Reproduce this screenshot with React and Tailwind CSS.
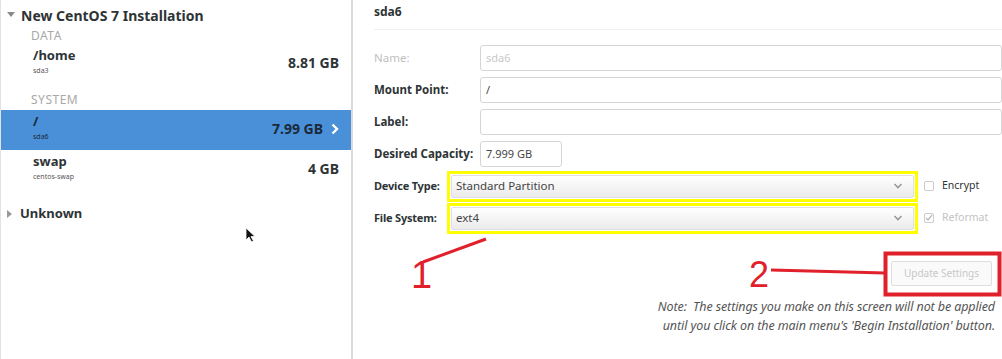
import React from 'react';

const font = { fontFamily: '"Noto Sans", "Open Sans", "DejaVu Sans", sans-serif' };

const Row = ({ name, dev, size, selected }) => (
  <div
    className={`flex items-start justify-between h-[40px] pl-[32px] pr-[12px] pt-[3px] ${
      selected ? 'bg-[#4a90d9] text-[#1b2a3a]' : 'text-[#2e3436]'
    }`}
  >
    <div className="flex flex-col">
      <span className="text-[13px] font-bold leading-[17px]">{name}</span>
      <span className={`text-[7px] leading-[14px] ${selected ? 'text-[#1b2a3a]' : 'text-[#555]'}`}>{dev}</span>
    </div>
    <div className="flex items-center gap-[8px] mt-[5px]">
      <span className="text-[14px] font-bold">{size}</span>
      {selected && (
        <svg width="8" height="12" viewBox="0 0 8 12">
          <path d="M1.5 1.5 L6 6 L1.5 10.5" stroke="#fff" strokeWidth="2.4" fill="none" />
        </svg>
      )}
    </div>
  </div>
);

const Field = ({ label, value, muted, labelW = 'w-[106px]', inputW = 'flex-1' }) => (
  <div className="flex items-center h-[32px]">
    <span className={`${labelW} text-[11.5px] font-bold ${muted ? 'text-[#c0c0c0] font-normal' : 'text-[#2e3436]'}`}>{label}</span>
    <div
      className={`${inputW} h-[26px] border border-[#d5d5d5] rounded-[3px] bg-white flex items-center px-[5px] text-[11px] ${
        muted ? 'text-[#c8c8c8]' : 'text-[#444]'
      }`}
    >
      {value}
    </div>
  </div>
);

const Combo = ({ label, value, check, checked, disabledCheck }) => (
  <div className="flex items-center h-[32px]">
    <span className="w-[73px] text-[11px] font-bold text-[#2e3436] tracking-[-0.2px]">{label}</span>
    <div className="w-[471px] h-[31px] border-[3px] border-[#ffff00] bg-white p-[1px]">
      <div className="h-full bg-gradient-to-b from-white to-[#ebebeb] border border-[#e0e0e0] rounded-[2px] flex items-center justify-between px-[4px] text-[11.5px] text-[#444]">
        <span>{value}</span>
        <svg width="10" height="8" viewBox="0 0 10 8" className="mr-[6px]">
          <path d="M1.5 2 L5 5.5 L8.5 2" stroke="#999" strokeWidth="1.6" fill="none" />
        </svg>
      </div>
    </div>
    <div className="flex items-center ml-[6px] gap-[8px]">
      <div className="w-[10px] h-[10px] border border-[#ccc] rounded-[2px] flex items-center justify-center">
        {checked && (
          <svg width="8" height="8" viewBox="0 0 8 8">
            <path d="M1 4 L3 6 L7 1" stroke="#bbb" strokeWidth="1.4" fill="none" />
          </svg>
        )}
      </div>
      <span className={`text-[10.5px] ${disabledCheck ? 'text-[#c4c4c4]' : 'text-[#2e3436]'}`}>{check}</span>
    </div>
  </div>
);

export default function App() {
  return (
    <div className="relative w-[1002px] h-[359px] bg-white flex overflow-hidden" style={font}>
      {/* left: partition list */}
      <div className="w-[353px] h-full border-l border-l-[#e2e2e2] border-r-2 border-r-[#dadada] flex flex-col">
        <div className="flex items-center h-[28px] pt-[2px] pl-[6px] gap-[6px] text-[#2e3436]">
          <svg width="8" height="6" viewBox="0 0 8 6">
            <path d="M0 0 L8 0 L4 5 Z" fill="#888" />
          </svg>
          <span className="text-[14px] font-bold">New CentOS 7 Installation</span>
        </div>
        <div className="pl-[30px] h-[16px] text-[12px] leading-[16px] text-[#a8a8a8] tracking-[0.5px]">DATA</div>
        <Row name="/home" dev="sda3" size="8.81 GB" />
        <div className="pl-[30px] h-[26px] pt-[8px] text-[12px] leading-[16px] text-[#a8a8a8] tracking-[0.5px]">SYSTEM</div>
        <Row name="/" dev="sda6" size="7.99 GB" selected />
        <Row name="swap" dev="centos-swap" size="4 GB" />
        <div className="flex items-center h-[26px] mt-[11px] pl-[6px] gap-[8px] text-[#2e3436]">
          <svg width="5" height="8" viewBox="0 0 5 8">
            <path d="M0 0 L5 4 L0 8 Z" fill="#999" />
          </svg>
          <span className="text-[13px] font-bold">Unknown</span>
        </div>
        <div className="relative flex-1">
          <svg width="12" height="18" viewBox="0 0 12 18" className="absolute left-[244px] top-[0px]">
            <path d="M1 1 L1 13 L4 10 L6.5 15 L8.5 14 L6 9.5 L10 9.5 Z" fill="#111" stroke="#fff" strokeWidth="0.8" />
          </svg>
        </div>
      </div>

      {/* right: details */}
      <div className="flex-1 flex flex-col pl-[21px]">
        <div className="h-[30px] pt-[3px] text-[12px] font-bold text-[#2e3436] border-b border-[#f0f0f0]">
          <span>sda6</span>
        </div>
        <div className="flex flex-col mt-[12px]">
          <Field label="Name:" value="sda6" muted />
          <Field label="Mount Point:" value="/" />
          <Field label="Label:" value="" />
          <Field label="Desired Capacity:" value="7.999 GB" inputW="w-[82px]" />
          <Combo label="Device Type:" value="Standard Partition" check="Encrypt" />
          <Combo label="File System:" value="ext4" check="Reformat" checked disabledCheck />
        </div>
        <div className="flex justify-end mt-[27px] pr-[10px]">
          <div className="w-[101px] h-[25px] border border-[#dedede] rounded-[2px] bg-[#fafafa] flex items-center justify-center text-[10px] text-[#c8c8c8]">
            Update Settings
          </div>
        </div>
        <div className="flex flex-col items-end mt-[11px] pr-[7px] text-[12.5px] italic text-[#555] leading-[19px] tracking-[-0.1px]">
          <span>Note:&nbsp; The settings you make on this screen will not be applied</span>
          <span>until you click on the main menu's 'Begin Installation' button.</span>
        </div>
      </div>

      {/* annotations */}
      <svg className="absolute left-0 top-0 pointer-events-none" width="1002" height="359">
        <line x1="423" y1="262" x2="486" y2="239" stroke="#e0202a" strokeWidth="3" />
        <line x1="771" y1="270" x2="885" y2="273" stroke="#e0202a" strokeWidth="3" />
        <rect x="885.5" y="253.5" width="114" height="41" fill="none" stroke="#e0202a" strokeWidth="4" />
      </svg>
      <span className="absolute left-[411px] top-[253px] text-[38px] leading-[44px] text-[#e0202a] pointer-events-none" style={{ fontFamily: '"Liberation Sans", sans-serif' }}>
        1
      </span>
      <span className="absolute left-[749px] top-[253px] text-[36px] leading-[44px] text-[#e0202a] pointer-events-none" style={{ fontFamily: '"Liberation Sans", sans-serif' }}>
        2
      </span>
    </div>
  );
}
